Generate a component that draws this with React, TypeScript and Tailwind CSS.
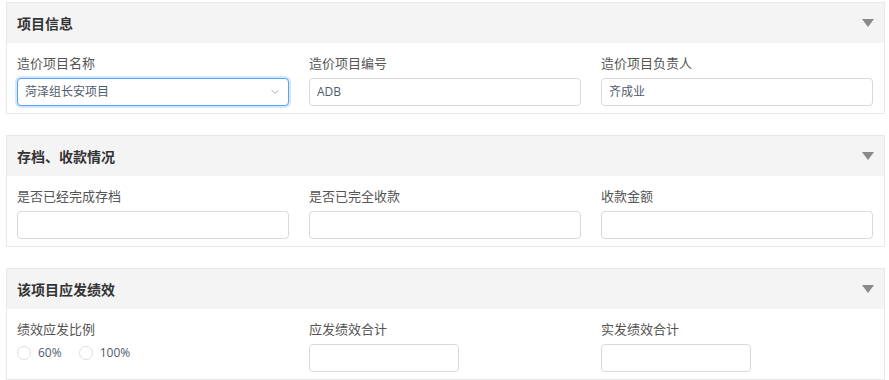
import { ChevronDown } from 'lucide-react';

type Field = { label: string; value?: string; select?: boolean; focused?: boolean; narrow?: boolean };

function Caret() {
  return (
    <svg width="12" height="8" viewBox="0 0 12 8" className="text-[#8a8a8a]">
      <path d="M0 0h12L6 8z" fill="currentColor" />
    </svg>
  );
}

function Panel({ title, children }: { title: string; children: React.ReactNode }) {
  return (
    <section className="border border-[#e8e8e8] bg-white">
      <div className="flex h-[40px] items-center justify-between bg-[#f4f4f4] pl-[10px] pr-[10px]">
        <h2 className="text-[14px] font-bold text-[#333]">{title}</h2>
        <Caret />
      </div>
      <div className="grid grid-cols-3 gap-x-[20px] pb-[7px] pl-[10px] pr-[11px] pt-[10px]">{children}</div>
    </section>
  );
}

function Input({ field }: { field: Field }) {
  return (
    <div>
      <div className="mb-[5px] h-[20px] text-[13px] leading-[20px] text-[#555]">{field.label}</div>
      <div
        className={
          'flex h-[28px] items-center justify-between rounded-[4px] border bg-white px-[7px] text-[12px] text-[#515a6e] ' +
          (field.focused
            ? 'border-[#57a3f3] shadow-[0_0_0_2px_rgba(45,140,240,0.2)]'
            : 'border-[#d9d9d9]') +
          (field.narrow ? ' w-[150px]' : '')
        }
      >
        <span>{field.value}</span>
        {field.select && <ChevronDown size={12} strokeWidth={1.5} className="text-[#808695]" />}
      </div>
    </div>
  );
}

function Radio({ label }: { label: string }) {
  return (
    <label className="flex items-center gap-[7px]">
      <span className="h-[14px] w-[14px] rounded-full border border-[#dcdee2] bg-white" />
      <span>{label}</span>
    </label>
  );
}

export default function App() {
  return (
    <div
      className="flex w-[889px] flex-col gap-[21px] bg-white pl-[6px] pr-[4px] pt-[2px]"
      style={{ fontFamily: '"Open Sans", "Noto Sans CJK SC", sans-serif' }}
    >
      <Panel title="项目信息">
        <Input field={{ label: '造价项目名称', value: '菏泽组长安项目', select: true, focused: true }} />
        <Input field={{ label: '造价项目编号', value: 'ADB' }} />
        <Input field={{ label: '造价项目负责人', value: '齐成业' }} />
      </Panel>

      <Panel title="存档、收款情况">
        <Input field={{ label: '是否已经完成存档' }} />
        <Input field={{ label: '是否已完全收款' }} />
        <Input field={{ label: '收款金额' }} />
      </Panel>

      <Panel title="该项目应发绩效">
        <div>
          <div className="mb-[5px] h-[20px] text-[13px] leading-[20px] text-[#555]">绩效应发比例</div>
          <div className="flex h-[18px] items-center gap-[17px] text-[12px] text-[#515a6e]">
            <Radio label="60%" />
            <Radio label="100%" />
          </div>
        </div>
        <Input field={{ label: '应发绩效合计', narrow: true }} />
        <Input field={{ label: '实发绩效合计', narrow: true }} />
      </Panel>
    </div>
  );
}
